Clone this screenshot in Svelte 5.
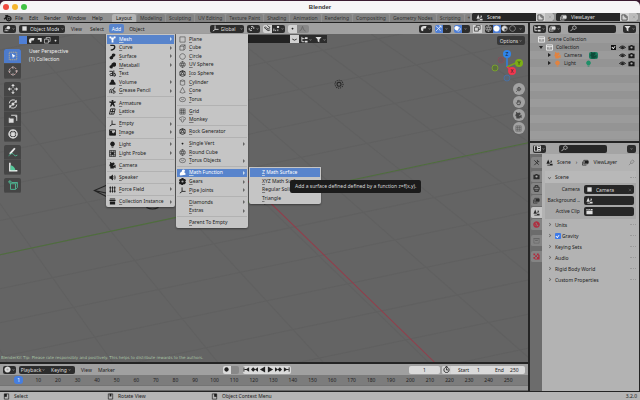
<script>
  const icons = {
    mesh: { s: 'M3 3L13 3L8 13Z', f: 'M1 1h4v4h-4zM11 1h4v4h-4zM6 11h4v4h-4zM4 4h8l-4 8z' },
    curve: { w: 3, s: 'M3 3H9Q14 3 13 8T4 14' },
    surface: { f: 'M3 8Q7 7 7 2Q12 0 15 4Q14 8 10 9Q10 14 6 15Q1 14 1 10Z' },
    metaball: { f: 'M10 1a5 5 0 1 1-1 9Q9 15 5 15Q1 15 1 11Q1 8 5 7Q5 2 10 1Z' },
    text: { w: 2, s: 'M1 3H8V14M8 8Q2 7 2 11T8 12M11 1V14M11 8Q15 7 15 11T11 14' },
    volume: { f: 'M7 1Q12 1 12 6Q16 8 15 13H1Q0 8 4 7Q3 2 7 1Z' },
    grease: { w: 2, s: 'M2 14V8Q2 5 6 5M6 14V8L14 1M10 6V10Q15 8 14 12T8 13' },
    armature: { f: 'M6 0h4v4l5-1v3l-4 1 3 8h-3l-3-5-3 5h-3l3-8-4-1v-3l5 1z' },
    lattice: { w: 2, s: 'M4 2H14L11 14H1ZM3 8H13M9 2L6 14' },
    empty: { w: 2, s: 'M7 1V10H15M7 10L2 14' },
    image: { w: 2, s: 'M1 2H15V14H1Z', f: 'M2 4h5v4l3 2 2-3 3 3v4h-13z' },
    light: { f: 'M8 1a5.500 5.500 0 0 1 3 10v1h-6v-1a5.500 5.500 0 0 1 3-10zM6 13h4v2h-4z' },
    probe: { w: 1.500, s: 'M1 1H15V15H1ZM5 1V15M1 5H15M1 11H15M11 1V15', f: 'M5 5h6v6h-6z' },
    camera: { f: 'M4 1a3 3 0 0 1 3 2 3 3 0 1 1 3 4v2l5-3v8l-4-2v3h-8v-5l-2-1v-3l2-2a3 3 0 0 1 1-5z' },
    speaker: { w: 1.500, s: 'M11 5Q13 8 11 11M13 3Q16 8 13 13', f: 'M1 5h3l5-4v14l-5-4h-3z' },
    force: { w: 2, s: 'M3 1V15M8 1V15M13 1V15M1 4H5M6 4H10M11 4H15M1 12H5M6 12H10M11 12H15' },
    box: { w: 1.500, s: 'M2 5V14H14V5', f: 'M1 2h14v3h-14zM5 7h6v2h-6z' },
    boxfull: { f: 'M2 1h12v2h-12zM1 4h14v3h-14zM2 8h12v7h-12z' },
    archive: { w: 2, s: 'M1 2H15V14H1ZM1 6H15M6 9H10' },
    plane: { s: 'M2 2H14V14H2Z' },
    cube: { s: 'M2 5L6 2H14V11L11 14H2ZM2 5H11V14M11 5L14 2' },
    circle: { s: 'M8 1.500a6.500 6.500 0 1 0 .1 0Z' },
    uv: { s: 'M8 1.500a6.500 6.500 0 1 0 .1 0ZM8 1Q3 8 8 15Q13 8 8 1M2 6H14M2 10H14' },
    ico: { w: 1.500, s: 'M8 1L14 4V12L8 15L2 12V4ZM8 4L12 11H4ZM8 1V4M2 12L4 11M14 12L12 11M2 4L8 4L14 4' },
    cylinder: { s: 'M3 4Q8 0 13 4V13Q8 16 3 13ZM3 4Q8 7 13 4' },
    cone: { s: 'M8 1L14 12Q8 16 2 12Z' },
    torus: { s: 'M1 8Q1 3 8 3T15 8T8 13T1 8ZM5 7Q8 10 11 7' },
    grid: { s: 'M2 2H14V14H2ZM2 6H14M2 10H14M6 2V14M10 2V14' },
    monkey: { s: 'M4 3Q8 0 12 3Q15 3 15 6T11 9L10 13Q8 15 6 13L5 9Q1 9 1 6T4 3M5 7H7M9 7H11' },
    dot: { f: 'M8 6a2 2 0 1 0 .1 0z' },
    gear: { f: 'M6 0h4l1 2 3 0 2 4-2 2 2 3-3 3-3 0-1 2h-3l-2-2-3 0-1-4 2-2-2-3 2-3h3z', hole: true },
    math: { f: 'M4 7Q7 7 7 2Q12 0 14 4Q14 6 11 7Q16 8 15 13L3 15Q1 13 2 10Z' },
    viewport: { w: 1.500, s: 'M1 13H10M4 10L6 14M3 8L10 7', f: 'M10 2a4 4 0 1 0 .1 0z' },
    scene: { f: 'M5 1l4 10h-8zM11 3a3 3 0 1 1-1 6zM9 11h6v4h-12v-2h6z' },
    layer: { w: 1.500, s: 'M1 6V14H10M4 3V11H13V3Z', f: 'M6 4h9v6h-9z' },
    tree: { w: 2, s: 'M2 2V13H8M2 6H8', f: 'M9 3h6v4h-6zM9 11h6v4h-6z' },
    proped: { w: 2, s: 'M1 2H15V14H1ZM8 2V14', f: 'M9 4h5v3h-5zM9 9h5v3h-5z' },
    filter: { f: 'M1 2h14l-5 6v7l-4-3v-4z' },
    search: { w: 2, s: 'M10 2a4 4 0 1 0 .1 0ZM6 9L1 14' },
    copy: { w: 1.500, s: 'M2 2H10L14 6V14H2ZM9 2V7H14' },
    close: { w: 1.500, s: 'M3 3L13 13M13 3L3 13' },
    eye: { w: 2, s: 'M1 8Q8 1 15 8Q8 14 1 8', f: 'M8 5a3 3 0 1 0 .1 0z' },
    photo: { f: 'M1 4h4l1-2h4l1 2h4v10h-14z', hole: true },
    tool: { w: 2, s: 'M3 14L10 7M10 2V6H14M3 3L13 13' },
    output: { w: 2, s: 'M2 5H14V11H2ZM5 5V1H11V5M4 11V15H12V11' },
    world: { w: 3, s: 'M8 2a6 6 0 1 0 .1 0ZM3 5Q8 7 7 13M9 3L12 9' },
    obj: { f: 'M3 3h10v10h-10z' },
    tray: { w: 2, s: 'M3 7Q8 12 13 7' },
    texture: { f: 'M1 1h4v4h-4zM9 1h4v4h-4zM5 5h4v4h-4zM1 9h4v4h-4zM9 9h4v4h-4zM12 4h3v11h-11v-2h8z' },
    pin: { w: 1.500, s: 'M2 14L7 9M5 7L9 11L14 5L11 2Z' },
    clip: { f: 'M1 6h14v8h-14zM1 2h3l-1 3h-2zM6 2h3l-1 3h-3zM11 2h4v3h-5z' },
    clock: { w: 2, s: 'M8 3a6 6 0 1 0 .1 0ZM8 5V9H12M6 1H10' },
    time: { f: 'M8 1a7 7 0 1 0 .1 0z', hole: true },
    magnet: { w: 2, s: 'M3 4L7 8Q9 11 12 8T11 4L8 1M3 4L1 6L5 10Q10 15 14 11' },
    snap: { w: 2, s: 'M2 14V8M6 14V11M11 14V10', f: 'M9 2h5v5h-5z' },
    link: { w: 2, s: 'M6 10L10 6M7 4a4 4 0 0 1 6 5M9 12a4 4 0 0 1-6-5' },
    falloff: { w: 2, s: 'M1 14Q6 13 8 3Q10 13 15 14' },
    record: { f: 'M8 3a5 5 0 1 0 .1 0z' },
    solid: { f: 'M8 1a7 7 0 1 0 .1 0z' },
    material: { w: 1.500, s: 'M8 2a6 6 0 1 0 .1 0Z', f: 'M8 2a6 6 0 0 0 0 12L8 8H14Q13 2 8 2z' },
    jumpstart: { w: 2, s: 'M2 3V13', f: 'M14 3v10l-8-5zM3 7h4v2h-4z' },
    prevkey: { f: 'M5 3l5 5-5 5-5-5zM16 3v10l-7-5z' },
    playback: { f: 'M14 1v14l-12-7z' },
    play: { f: 'M2 1v14l12-7z' },
    nextkey: { f: 'M11 3l5 5-5 5-5-5zM0 3v10l7-5z' },
    jumpend: { w: 2, s: 'M14 3V13', f: 'M2 3v10l8-5zM9 7h4v2h-4z' },
    mouse: { w: 1.500, s: 'M3 2H13V14H3ZM8 2V8H3', f: 'M3 2h5v6h-5z' },
    mousem: { w: 1.500, s: 'M3 2H13V14H3Z', f: 'M6 2h4v6h-4z' },
    mouser: { w: 1.500, s: 'M3 2H13V14H3ZM8 2V8H13', f: 'M8 2h5v6h-5z' },
    logo: { w: 2.500, s: 'M2 11L9 4M4 5H9M10 6a4 4 0 1 0 .1 0Z', f: 'M10 8a2 2 0 1 0 .1 0z' },
    overlay: { w: 1.500, s: 'M10 5a4.500 4.500 0 1 1-.1 0Z', f: 'M6 2a5 5 0 1 0 .1 0z' },
    gizmo: { w: 1.500, s: 'M2 14L14 2M9 2H14V7M2 3Q9 6 13 14' },
    xray: { w: 1.500, s: 'M1 5H10V14H1ZM5 5V1H14V10H10' },
    mask: { f: 'M2 9Q2 2 9 2H15L13 8H8L7 14Q2 14 2 9z' },
    corner: { f: 'M4 2h9v9h-4v-5h-5z' },
    zoom: { w: 2, s: 'M9 3a4 4 0 1 0 .1 0ZM6 10L3 13M7 7H11M9 5V9' },
    hand: { w: 2, s: 'M3 8L6 13H11L13 6M6 9V3M8.500 8V2M11 8V3' },
    move: { w: 1.500, s: 'M8 1V6M8 10V15M1 8H6M10 8H15', f: 'M8 0l3 3h-6zM8 16l3-3h-6zM0 8l3-3v6zM16 8l-3-3v6z' },
    rotate: { w: 1.500, s: 'M2 7A6 6 0 0 1 13 4M14 9A6 6 0 0 1 3 12', f: 'M14 1v5h-5zM2 15v-5h5zM8 5l3 3-3 3-3-3z' },
    scale: { w: 1.500, s: 'M5 2H14V11M2 6V14', f: 'M2 7h7v7h-7zM11 3l3 0v3z' },
    transform: { w: 2, s: 'M8 1.500a6.500 6.500 0 1 0 .1 0ZM8 1V4M8 12V15M1 8H4M12 8H15', f: 'M5 5h6v6h-6z' }
  };

  const parse = (rows) => rows.map((r) => (r ? { icon: r[0], label: r[1], sub: !!r[2], on: !!r[3] } : null));
  const addMenu = parse([
    ['mesh', 'Mesh', 1, 1], ['curve', 'Curve', 1], ['surface', 'Surface', 1], ['metaball', 'Metaball', 1],
    ['text', 'Text'], ['volume', 'Volume', 1], ['grease', 'Grease Pencil', 1], null,
    ['armature', 'Armature'], ['lattice', 'Lattice'], null,
    ['empty', 'Empty', 1], ['image', 'Image', 1], null,
    ['light', 'Light', 1], ['probe', 'Light Probe', 1], null,
    ['camera', 'Camera'], null, ['speaker', 'Speaker'], null,
    ['force', 'Force Field', 1], null, ['boxfull', 'Collection Instance', 1]
  ]);
  const meshMenu = parse([
    ['plane', 'Plane'], ['cube', 'Cube'], ['circle', 'Circle'], ['uv', 'UV Sphere'], ['ico', 'Ico Sphere'],
    ['cylinder', 'Cylinder'], ['cone', 'Cone'], ['torus', 'Torus'], null,
    ['grid', 'Grid'], ['monkey', 'Monkey'], null, ['ico', 'Rock Generator'], null,
    ['dot', 'Single Vert', 1], ['uv', 'Round Cube'], ['torus', 'Torus Objects', 1], null,
    ['math', 'Math Function', 1, 1], ['gear', 'Gears', 1], ['empty', 'Pipe Joints', 1], null,
    ['', 'Diamonds', 1], ['', 'Extras', 1], null, ['', 'Parent To Empty']
  ]);
  const mathMenu = parse([['', 'Z Math Surface', 0, 1], ['', 'XYZ Math Surface'], ['', 'Regular Solid'], ['', 'Triangle']]);

  const tabs = ['Layout', 'Modeling', 'Sculpting', 'UV Editing', 'Texture Paint', 'Shading', 'Animation', 'Rendering', 'Compositing', 'Geometry Nodes', 'Scripting', '+'];
  const toolGroups = [['cursor', 'ring'], ['move', 'rotate', 'scale', 'transform'], ['annotate', 'measure'], ['addcube']];
  const frames = Array.from({ length: 26 }, (_, i) => (i === 0 ? 1 : i * 10));
  const panels = ['Units', 'Gravity', 'Keying Sets', 'Audio', 'Rigid Body World', 'Custom Properties'];
  const propTabs = [['tool', 'start'], ['photo', ''], ['output', ''], ['layer', ''], ['scene', 'on'], ['world', 'red'], ['box', 'gap dim'], ['texture', 'gap red']];
  const gridLines = [];
  for (let i = -6; i < 16; i++) gridLines.push(`M0 ${i * 34 + 84}L528 ${i * 34 - 27}`);
  for (let i = -9; i < 9; i++) gridLines.push(`M${i * 70 + 90} 0L${i * 105 + 427} 327`);
</script>

{#snippet ic(name, cls = '')}
  <svg class="ic {cls}" viewBox="0 0 16 16" aria-hidden="true">
    {#if icons[name]}
      {#if icons[name].f}<path d={icons[name].f} fill="currentColor" />{/if}
      {#if icons[name].s}<path d={icons[name].s} fill="none" stroke="currentColor" stroke-width={icons[name].w ?? 1} />{/if}
      {#if icons[name].hole}<circle cx="8" cy="8" r="2.500" fill="#aaa" />{/if}
    {/if}
  </svg>
{/snippet}

{#snippet menu(items, cls)}
  <div class="menu {cls}" role="menu">
    {#each items as it}
      {#if it}
        <button class="mi" class:on={it.on} role="menuitem">
          {@render ic(it.icon)}<span><u>{it.label[0]}</u>{it.label.slice(1)}</span>
          {#if it.sub}<i class="tri"></i>{/if}
        </button>
      {:else}
        <div class="sep"><hr /></div>
      {/if}
    {/each}
  </div>
{/snippet}

<div class="app">
  <header class="title">
    <div class="lights"><i class="r"></i><i class="y"></i><i class="g"></i></div>
    <strong>Blender</strong>
  </header>

  <nav class="top">
    <button aria-label="Blender menu">{@render ic('logo', 'big')}</button>
    <div class="mainmenu">
      {#each ['File', 'Edit', 'Render', 'Window', 'Help'] as m}<button>{m}</button>{/each}
    </div>
    <div class="tabs">
      {#each tabs as t, i}<button class:on={i === 0}>{t}</button>{/each}
    </div>
    <div class="picker"><button class="dark" aria-label="Browse scenes">{@render ic('scene')}</button><input aria-label="Scene" value="Scene" /><button class="lit" aria-label="New scene">{@render ic('copy')}</button><button class="lit dim" aria-label="Delete scene">{@render ic('close', 'sm')}</button></div>
    <div class="picker"><button class="dark" aria-label="Browse view layers">{@render ic('layer')}</button><input aria-label="View layer" value="ViewLayer" /><button class="lit" aria-label="New view layer">{@render ic('copy')}</button><button class="lit dim" aria-label="Delete view layer">{@render ic('close', 'sm')}</button></div>
  </nav>

  <div class="body">
    <main>
      <div class="head vhead">
        <button class="dark ed" aria-label="Editor type">{@render ic('viewport')}<i class="car"></i></button>
        <label class="dark mode">{@render ic('obj')}<select aria-label="Mode"><option>Object Mode</option></select><i class="car"></i></label>
        <div class="vmenus"><button>View</button><button>Select</button><button class="on">Add</button><button>Object</button></div>
        <div class="mid">
          <label class="dark orient">{@render ic('empty')}<select aria-label="Orientation"><option>Global</option></select><i class="car"></i></label>
          <button class="dark two" aria-label="Pivot point">{@render ic('link')}<i class="car"></i></button>
          <div class="grp"><button class="lit" aria-label="Snap">{@render ic('magnet')}</button><button class="dark" aria-label="Snap to">{@render ic('snap')}<i class="car"></i></button></div>
          <div class="grp"><button class="lit" aria-label="Proportional editing">{@render ic('dot')}</button><button class="grey" aria-label="Falloff">{@render ic('falloff')}</button></div>
        </div>
        <div class="shade">
          <button class="dark" aria-label="Visibility">{@render ic('mask')}<i class="car"></i></button>
          <div class="grp"><button class="blue" aria-label="Gizmos">{@render ic('gizmo')}</button><button class="dark" aria-label="Gizmo options"><i class="car"></i></button></div>
          <div class="grp"><button class="blue" aria-label="Overlays">{@render ic('overlay')}</button><button class="dark" aria-label="Overlay options"><i class="car"></i></button></div>
          <button class="lit" aria-label="X-ray">{@render ic('xray')}</button>
          <div class="grp"><button class="dark" aria-label="Wireframe">{@render ic('uv')}</button><button class="blue" aria-label="Solid">{@render ic('solid')}</button><button class="dark" aria-label="Material">{@render ic('material')}</button><button class="dark" aria-label="Rendered">{@render ic('circle')}</button><button class="dark" aria-label="Shading options"><i class="car"></i></button></div>
        </div>
      </div>

      <section class="view">
        <svg class="scene" viewBox="0 0 528 327" preserveAspectRatio="xMinYMin slice" aria-hidden="true">
          <path d={gridLines.join('')} stroke="#585858" stroke-width="1" opacity=".35" fill="none" />
          <path d="M0 220L528 108" stroke="#4f6f3c" stroke-width="1" fill="none" />
          <path d="M230 130L433 327" stroke="#953c4a" stroke-width="1" fill="none" />
          <path d="M108 150L94 156L108 163M94 156L108 159M146 173q6 3 12 0M264 168v2" stroke="#222" stroke-width="1" fill="none" />
          <circle cx="338" cy="50" r="2" fill="none" stroke="#222" />
          <circle cx="338" cy="50" r="4" fill="none" stroke="#222" stroke-dasharray="1 1" />
        </svg>
        <div class="toolcol">
          <div class="selmodes">
            <button class="blue" aria-label="Set"></button>
            {#each ['mask', 'corner', 'xray', 'dot'] as s}<button class="dark" aria-label={s}>{@render ic(s)}</button>{/each}
          </div>
          {#each toolGroups as g}
            <div class="tools">
              {#each g as t}
                <button class:on={t === 'cursor'} aria-label={t}>
                  {#if t === 'cursor'}
                    <svg viewBox="0 0 16 16"><path d="M2 2H14V14H2Z" fill="none" stroke="#e8c070" stroke-dasharray="2 1" /><path d="M6 4l6 4-3 1-1 3z" fill="#fff" /></svg>
                  {:else if t === 'ring'}
                    <svg viewBox="0 0 16 16"><circle cx="8" cy="8" r="6" fill="none" stroke="#e6b8b8" stroke-width="1.500" stroke-dasharray="3 2" /><path d="M8 0V5M8 11V16M0 8H5M11 8H16" stroke="#ccc" /></svg>
                  {:else if t === 'annotate'}
                    <svg viewBox="0 0 16 16"><path d="M3 11L11 2" stroke="#eee" stroke-width="3" /><path d="M1 14Q7 8 9 12T15 13" fill="none" stroke="#4fb592" stroke-width="1.500" /></svg>
                  {:else if t === 'measure'}
                    <svg viewBox="0 0 16 16"><path d="M3 1V14H15" fill="none" stroke="#eee" stroke-width="2.500" /><path d="M4 5Q10 6 12 13H4Z" fill="#55c99a" /></svg>
                  {:else if t === 'addcube'}
                    <svg viewBox="0 0 16 16"><path d="M4 6H12V15H4ZM4 6L6 4H15V12L12 15M12 6L15 4M3 0V6M0 3H6" fill="none" stroke="#4fb592" stroke-width="1.500" /></svg>
                  {:else}{@render ic(t)}{/if}
                </button>
              {/each}
            </div>
          {/each}
        </div>
        <div class="info">User Perspective<br />(1) Collection</div>
        <div class="filterbar">
          <input aria-label="Filter assets" /><button class="lit" aria-label="Panel">{@render ic('tray')}</button><button class="dark" aria-label="Tree">{@render ic('tree')}<i class="car"></i></button><button class="dark" aria-label="Filter">{@render ic('filter')}<i class="car"></i></button>
        </div>
        <div class="side">
          <button class="dark options">Options<i class="car"></i></button>
          <svg class="axes" viewBox="0 0 36 36" aria-hidden="true">
            <path d="M18 20V7" stroke="#2f80e0" stroke-width="1.500" /><path d="M18 20L29 15" stroke="#78a818" stroke-width="1.500" /><path d="M18 20L24 24" stroke="#f0364e" stroke-width="1.500" />
            <circle cx="12" cy="13" r="3" fill="#6a5a60" stroke="#84505a" /><circle cx="6" cy="21" r="3" fill="#5c703c" stroke="#78a030" /><circle cx="18" cy="31" r="3" fill="#5a6674" stroke="#4a70a0" />
            <circle cx="18" cy="7" r="4" fill="#2f84ea" /><circle cx="30" cy="16" r="4" fill="#7cae16" /><circle cx="23" cy="24" r="4" fill="#f2364e" />
            <g font-size="5" text-anchor="middle" fill="#222"><text x="18" y="9">Z</text><text x="30" y="18">Y</text><text x="23" y="26">X</text></g>
          </svg>
          <div class="nav">{#each ['zoom', 'hand', 'camera', 'grid'] as n}<button aria-label={n}>{@render ic(n)}</button>{/each}</div>
        </div>
        <p class="note">BlenderKit Tip: Please rate responsibly and positively. This helps to distribute rewards to the authors.</p>
      </section>

      <section class="timeline">
        <div class="head thead">
          <button class="dark ed" aria-label="Editor type">{@render ic('time')}<i class="car"></i></button>
          <div class="grp pk"><button class="dark">Playback<i class="car"></i></button><button class="dark">Keying<i class="car"></i></button></div>
          <button>View</button><button>Marker</button>
          <div class="play">
            <div class="grp"><button class="lit" aria-label="Record">{@render ic('record')}</button><button class="grey" aria-label="Keying set"></button></div>
            <div class="grp">{#each ['jumpstart', 'prevkey', 'playback', 'play', 'nextkey', 'jumpend'] as p}<button class="lit" aria-label={p}>{@render ic(p)}</button>{/each}</div>
          </div>
          <div class="framesel">
            <input class="cur" aria-label="Current frame" value="1" />
            <div class="grp rng"><button class="lit" aria-label="Preview range">{@render ic('clock')}</button><label>Start<input value="1" /></label><label>End<input value="250" /></label></div>
          </div>
        </div>
        <div class="ruler">{#each frames as f, i}<span><b class:now={i === 0}>{f}</b></span>{/each}</div>
        <div class="track"></div>
      </section>
    </main>

    <aside>
      <section class="outliner">
        <div class="head">
          <button class="dark ed" aria-label="Editor type">{@render ic('tree')}<i class="car"></i></button><button class="dark ed" aria-label="Display mode">{@render ic('layer')}<i class="car"></i></button>
          <label class="srch">{@render ic('search')}<input aria-label="Search outliner" /></label><button class="dark ed" aria-label="Filter">{@render ic('filter')}<i class="car"></i></button>
        </div>
        <div class="rows">
          <div class="row l0"><span class="w">{@render ic('archive')}</span>Scene Collection</div>
          <div class="row l1"><i class="down"></i><span class="w">{@render ic('archive')}</span>Collection<span class="tog"><input type="checkbox" checked aria-label="Collection enabled" />{@render ic('eye')}{@render ic('photo')}</span></div>
          <div class="row l2"><i class="tri"></i><span class="o">{@render ic('camera')}</span>Camera<span class="gb">{@render ic('camera')}</span><span class="tog">{@render ic('eye')}{@render ic('photo')}</span></div>
          <div class="row l2"><i class="tri"></i><span class="o">{@render ic('light')}</span>Light<span class="gl">{@render ic('light')}</span><span class="tog">{@render ic('eye')}{@render ic('photo')}</span></div>
          {#each Array(9) as _}<div class="row"></div>{/each}
        </div>
      </section>

      <section class="props">
        <div class="head">
          <button class="dark ed" aria-label="Editor type">{@render ic('proped')}<i class="car"></i></button>
          <label class="srch">{@render ic('search')}<input aria-label="Search properties" /></label><button class="dark last" aria-label="Options"><i class="car"></i></button>
        </div>
        <div class="pbody">
          <div class="ptabs">{#each propTabs as [n, c]}<button class={c} aria-label={n}>{@render ic(n)}</button>{/each}</div>
          <div class="pmain">
            <div class="crumb">{@render ic('scene')}<span>Scene</span><b>›</b>{@render ic('layer')}<span>ViewLayer</span>{@render ic('pin', 'pin')}</div>
            <button class="ph first"><i class="chev dn"></i>Scene<em></em></button>
            <div class="fields">
              <label for="cam">Camera</label><div class="fld">{@render ic('obj')}<input id="cam" value="Camera" />{@render ic('close', 'sm')}</div>
              <label for="bg">Background ..</label><div class="fld">{@render ic('scene')}<input id="bg" /></div>
              <label for="clip">Active Clip</label><div class="fld">{@render ic('clip')}<input id="clip" /></div>
            </div>
            {#each panels as p}
              <div class="ph"><i class="chev"></i>{#if p === 'Gravity'}<label><input type="checkbox" checked />{p}</label>{:else}<button>{p}</button>{/if}<em></em></div>
            {/each}
          </div>
        </div>
      </section>
    </aside>
  </div>

  <footer>
    <span>{@render ic('mouse')}Select</span><span>{@render ic('mousem')}Rotate View</span><span>{@render ic('mouser')}Object Context Menu</span><b>3.2.0</b>
  </footer>

  {@render menu(addMenu, 'm1')}
  {@render menu(meshMenu, 'm2')}
  {@render menu(mathMenu, 'm3')}
  <div class="tip" role="tooltip">Add a surface defined defined by a function z=f(x,y).</div>
</div>

<style>
  :global(body) { background: #3a1a30; }
  .app { position: relative; display: flex; flex-direction: column; height: 100vh; min-height: 400px; overflow: hidden; box-sizing: border-box; padding-top: 1px; font: 5px/8px "Noto Sans", "DejaVu Sans", sans-serif; color: #1c1c1c; }
  .app * { box-sizing: border-box; }
  button, input, select { font: inherit; color: inherit; border: 0; margin: 0; padding: 0; background: none; min-width: 0; appearance: none; outline: 0; }
  button { display: flex; align-items: center; justify-content: center; gap: 1px; white-space: nowrap; }
  .ic { width: 7px; height: 7px; flex: none; display: block; }
  .big { width: 9px; height: 9px; }
  .sm { width: 4px; height: 4px; color: #888; }
  .car { width: 3px; height: 3px; flex: none; border: solid #777; border-width: 0 1px 1px 0; transform: rotate(45deg) scale(0.6); }
  .tri { flex: none; border-left: 3px solid #666; border-top: 2px solid transparent; border-bottom: 2px solid transparent; }

  .title { position: relative; height: 12px; flex: none; display: flex; align-items: center; justify-content: center; background: #f6f5f6; border-radius: 5px 5px 0 0; font: 6px/8px "Liberation Sans", Arial, sans-serif; color: #333; }
  .lights { position: absolute; left: 3px; display: flex; gap: 3px; }
  .lights i { width: 6px; height: 6px; border-radius: 50%; background: #f0483f; }
  .lights .y { background: #f5b52e; }
  .lights .g { background: #42c344; }

  .top { display: flex; height: 10px; flex: none; align-items: stretch; background: #929292; padding: 0 2px 0 3px; gap: 2px; border-bottom: 1px solid #222; }
  .mainmenu { display: flex; gap: 6px; margin-left: 1px; width: 95px; flex: none; }
  .tabs { display: flex; flex: 1; gap: 1px; min-width: 0; overflow: hidden; }
  .tabs button { flex: none; padding: 0 3px; background: #838383; border-radius: 2px 2px 0 0; color: #333; margin-top: 1px; }
  .tabs .on { background: #b3b3b3; color: #111; padding: 0 4px; }
  .picker { display: flex; width: 82px; flex: none; height: 8px; background: #262626; color: #e0e0e0; border-radius: 2px; overflow: hidden; }
  .picker input { flex: 1; width: 100%; }
  .picker .dark { width: 15px; }
  .dark { background: #2c2c2c; color: #dcdcdc; border-radius: 2px; }
  .lit { background: #d2d2d2; color: #222; }
  .picker .lit, .head .lit { width: 9px; flex: none; }
  .picker .dim { background: #bcbcbc; }
  .dim { color: #999; }
  .blue { background: #4f7fd6; color: #fff; }
  .grey { background: #888; color: #666; }

  .body { flex: 1; display: flex; min-height: 0; background: #242424; gap: 2px; }
  main { flex: 1; display: flex; flex-direction: column; min-width: 0; }
  aside { width: 17.200%; min-width: 110px; display: flex; flex-direction: column; gap: 2px; padding-right: 1px; }
  .head { display: flex; align-items: center; height: 11px; flex: none; background: #a0a0a0; padding: 0 3px; gap: 2px; }
  .head .dark, .head .lit, .head .blue, .head .grey { height: 8px; }
  .grp { display: flex; border-radius: 2px; overflow: hidden; }
  .grp button { border-radius: 0; }
  .ed { width: 13px; flex: none; }
  .mode, .orient { display: flex; align-items: center; gap: 1px; padding: 0 1px 0 2px; }
  .mode { width: 46px; margin-left: 1px; gap: 2px; }
  .mode select, .orient select { flex: 1; }
  .vmenus { display: flex; gap: 2px; margin-left: 1px; align-self: stretch; align-items: center; }
  .vmenus button { padding: 0 3px; height: 9px; }
  .vmenus .on { background: #5884cc; color: #fff; border-radius: 2px; }
  .mid { display: flex; gap: 3px; flex: 1; padding-left: 60px; }
  .orient { width: 34px; gap: 2px; }
  .two { width: 13px; }
  .mid .grp .dark { width: 13px; }
  .mid .grey { width: 12px; }
  .shade { display: flex; gap: 3px; }
  .shade > .dark { width: 13px; }
  .shade .grp .dark, .shade .blue { width: 8px; }

  .view { position: relative; flex: 1; display: flex; background: #646464; min-height: 0; padding: 0 3px 0 4px; }
  .scene { position: absolute; inset: 0; width: 100%; height: 100%; }
  .toolcol { position: relative; width: 17px; display: flex; flex-direction: column; gap: 3px; padding-top: 2px; }
  .selmodes { display: flex; height: 8px; margin: 0 0 2px 15px; width: 39px; }
  .selmodes button { width: 8px; flex: none; border-radius: 0; }
  .tools { display: flex; flex-direction: column; background: #454545; border-radius: 2px; overflow: hidden; }
  .tools button { height: 15px; color: #ddd; border-bottom: 1px solid #505050; }
  .tools .on { background: #4d7bcb; }
  .tools svg { width: 10px; height: 10px; }
  .info { position: relative; margin: 13px 0 0 8px; color: #f0f0f0; white-space: nowrap; }
  .filterbar { position: absolute; left: 248px; top: 1px; display: flex; height: 8px; }
  .filterbar input { width: 42px; background: #222; }
  .filterbar .lit { width: 9px; }
  .filterbar .dark { width: 14px; border-radius: 0; }
  .side { position: relative; margin-left: auto; display: flex; flex-direction: column; align-items: flex-end; padding-top: 2px; }
  .options { height: 9px; width: 28px; background: #383838; }
  .axes { width: 36px; height: 36px; margin-top: 2px; }
  .nav { display: flex; flex-direction: column; gap: 1px; }
  .nav button { width: 12px; height: 12px; border-radius: 50%; background: #a2a2a2; color: #444; }
  .note { position: absolute; left: 1px; bottom: 1px; margin: 0; font: 4px/6px "DejaVu Sans", sans-serif; color: #a9c2a5; white-space: nowrap; }

  .timeline { border-top: 2px solid #242424; background: #8b8b8b; }
  .thead > button:not(.ed) { padding: 0 2px; }
  .pk { margin: 0 2px 0 1px; }
  .pk button { padding: 0 3px; width: 28px; }
  .play { display: flex; gap: 4px; margin-left: auto; padding-right: 12px; }
  .head .play .lit, .play .grey { width: 8px; }
  .head .play .lit, .framesel .cur, .rng { background: #dadada; }
  .framesel { display: flex; gap: 2px; margin-left: auto; height: 8px; }
  .cur { width: 31px; text-align: center; border-radius: 2px; }
  .rng label { display: flex; width: 37px; padding-left: 7px; white-space: nowrap; }
  .rng input { flex: 1; width: 100%; text-align: center; }
  .ruler { display: flex; height: 10px; padding: 0 10px 0 9px; background: #7c7c7c; color: #222; }
  .ruler span { flex: 1 1 0; min-width: 0; display: flex; justify-content: center; align-items: center; }
  .ruler b { font-weight: 400; }
  .ruler .now { background: #467ee0; color: #fff; border-radius: 3px; padding: 0 3px; }
  .track { height: 6px; border-top: 1px solid #747474; border-bottom: 1px solid #666; background: #969696; }

  .outliner { background: #969696; flex: none; padding-bottom: 2px; }
  aside .head { background: #a4a4a4; }
  .srch { flex: 1; display: flex; align-items: center; height: 8px; margin: 0 5px; padding: 0 2px; background: #262626; color: #ccc; border-radius: 2px; }
  .srch input { width: 100%; }
  .props .srch { margin: 0 18px 0 11px; }
  .rows { background: #9b9b9b; padding-top: 1px; }
  .row { display: flex; align-items: center; gap: 3px; height: 8px; padding: 0 4px 0 9px; }
  .row:nth-child(even) { background: #949494; }
  .l0 { padding-left: 8px; }
  .l2 { padding-left: 18px; }
  .down { border-top: 3px solid #222; border-left: 2px solid transparent; border-right: 2px solid transparent; }
  .row .tri { border-left-color: #222; }
  .w { color: #eee; }
  .o { color: #e18340; }
  .gb { background: #177a5c; border-radius: 2px; padding: 0 1px; color: #0d4a38; margin-left: 4px; }
  .gl { color: #1f8f68; margin-left: 6px; }
  .tog { margin-left: auto; display: flex; gap: 2px; align-items: center; }
  .tog input { width: 5px; height: 5px; background: #111; margin-right: 1px; display: grid; place-items: center; }
  .tog input::after, .ph input::after { content: ""; width: 2px; height: 3px; border: solid #fff; border-width: 0 1px 1px 0; transform: rotate(40deg) scale(0.8); }

  .props { flex: 1; display: flex; flex-direction: column; background: #b3b3b3; }
  .last { width: 9px; }
  .pbody { flex: 1; display: flex; }
  .ptabs { width: 12px; background: #6c6c6c; display: flex; flex-direction: column; padding: 3px 0 0 1px; }
  .ptabs button { height: 12px; background: #848484; border-bottom: 1px solid #6c6c6c; border-radius: 2px 0 0 2px; color: #2c2c2c; }
  .ptabs .on { background: #c4c4c4; }
  .ptabs .red { color: #b02c3e; }
  .ptabs .dim { color: #666; }
  .ptabs .gap { margin-top: 4px; }
  .ptabs .start { margin-bottom: 2px; }
  .pmain { flex: 1; min-width: 0; padding: 3px 3px 0; }
  .crumb { display: flex; align-items: center; gap: 4px; height: 10px; padding: 0 1px; }
  .crumb b { margin: 0 1px; font-weight: 400; }
  .crumb .pin { margin-left: auto; color: #777; }
  .ph { display: flex; align-items: center; justify-content: flex-start; width: 100%; gap: 4px; height: 11px; padding-left: 3px; }
  .ph.first { margin-top: 4px; height: 12px; background: #b8b8b8; }
  .ph label { display: flex; align-items: center; gap: 1px; }
  .ph input { width: 6px; height: 6px; background: #3d7ae8; border-radius: 1px; display: grid; place-items: center; }
  .ph em { margin-left: auto; width: 6px; border-top: 1px dotted #999; }
  .chev { width: 3px; height: 3px; border: solid #666; border-width: 1px 1px 0 0; transform: rotate(45deg) scale(0.8); }
  .dn { transform: rotate(135deg) scale(0.8); }
  .fields { display: grid; grid-template-columns: 35px 1fr; gap: 2px 4px; background: #a8a8a8; padding: 2px 2px 3px 0; }
  .fields label { text-align: right; white-space: nowrap; }
  .fld { display: flex; align-items: center; gap: 3px; height: 9px; padding: 0 2px; background: #272727; color: #ddd; border-radius: 2px; }
  .fld input { flex: 1; width: 100%; }

  footer { display: flex; align-items: center; height: 9px; flex: none; background: #b5b5b5; border-top: 1px solid #242424; padding: 0 3px; }
  footer span { display: flex; align-items: center; gap: 4px; width: 104px; white-space: nowrap; }
  footer b { margin-left: auto; font-weight: 400; }

  .menu { position: absolute; display: flex; flex-direction: column; padding: 1px; background: #c5c5c5; border-radius: 0 0 2px 2px; box-shadow: 0 1px 2px #0006; }
  .m1 { left: 106px; top: 34px; width: 69px; height: 173px; }
  .m2 { left: 176px; top: 34px; width: 72px; height: 194px; }
  .m3 { left: 249px; top: 167px; width: 72px; height: 37px; }
  .mi { flex: 17 1 0; min-height: 0; justify-content: flex-start; gap: 3px; padding: 0 2px; line-height: 7px; }
  .mi u { text-decoration-thickness: 1px; text-decoration-color: #777; text-underline-offset: 1px; }
  .mi .tri { margin-left: auto; border-left-width: 2px; }
  .mi.on { background: #5884cc; color: #fff; }
  .mi.on u { text-decoration-color: #bcd; }
  .mi.on .tri { border-left-color: #cde; }
  .sep { flex: 7 1 0; display: flex; align-items: center; }
  .sep hr { width: 100%; margin: 0; border: 0; border-top: 1px solid #b2b2b2; }
  .tip { position: absolute; left: 290px; top: 180px; height: 13px; padding: 0 5px; line-height: 13px; white-space: nowrap; background: #1b1b1b; color: #d8d8d8; border-radius: 2px; }
</style>
